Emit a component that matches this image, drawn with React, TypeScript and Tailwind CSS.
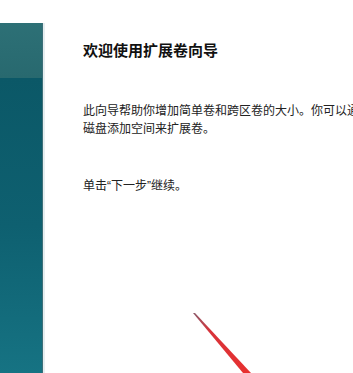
export default function App() {
  return (
    <div className="relative h-[373px] w-[353px] overflow-hidden bg-white font-['Noto_Sans_CJK_SC',sans-serif] text-[#1a1a1a]">
      <div className="flex h-full">
        {/* left wizard banner */}
        <div className="mt-[23px] flex w-[45px] shrink-0">
          <div className="flex w-[42px] flex-col">
            <div className="h-[55px] bg-gradient-to-b from-[#2d7076] to-[#28696f]" />
            <div className="flex-1 bg-gradient-to-b from-[#0b5867] via-[#0e6070] to-[#167383]" />
          </div>
          <div className="w-px bg-[#3d6f78]" />
          <div className="w-[2px] bg-[#e6eef0]" />
        </div>

        {/* content */}
        <div className="pl-[38px] pt-[40px]">
          <h1 className="whitespace-nowrap text-[15px] font-bold leading-[20px] text-[#111]">
            欢迎使用扩展卷向导
          </h1>
          <div className="mt-[41px] text-[12px] leading-[18px] text-[#222]">
            <p className="whitespace-nowrap">此向导帮助你增加简单卷和跨区卷的大小。你可以通过从一个或多个额外</p>
            <p className="whitespace-nowrap">磁盘添加空间来扩展卷。</p>
          </div>
          <p className="mt-[39px] whitespace-nowrap text-[12px] leading-[18px] text-[#222]">
            单击<span className="font-['Liberation_Sans',sans-serif]">“</span>下一步<span className="font-['Liberation_Sans',sans-serif]">”</span>继续。
          </p>
        </div>
      </div>

      {/* red annotation arrow */}
      <svg className="absolute left-0 top-0" width="353" height="373" viewBox="0 0 353 373">
        <defs>
          <linearGradient id="arrow" x1="0" y1="0" x2="1" y2="1">
            <stop offset="0" stopColor="#8a5a6a" />
            <stop offset="0.3" stopColor="#d8333a" />
            <stop offset="1" stopColor="#e8302f" />
          </linearGradient>
        </defs>
        <polygon points="193,313 195,313 251,373 243,373" fill="url(#arrow)" />
      </svg>
    </div>
  );
}
